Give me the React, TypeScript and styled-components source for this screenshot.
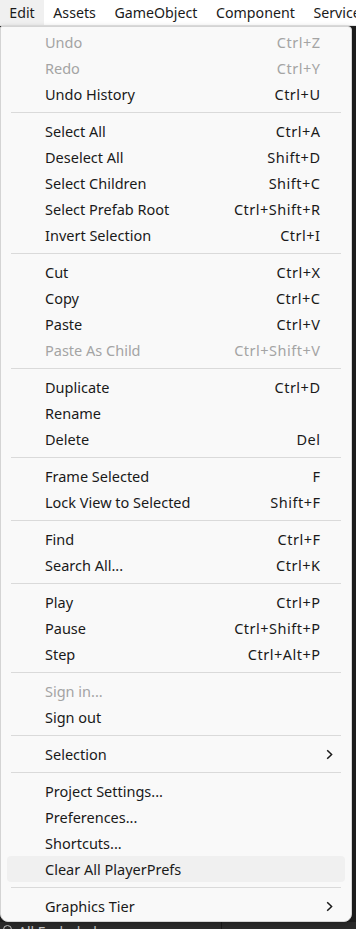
import React from "react";
import styled, { createGlobalStyle } from "styled-components";

const GlobalStyle = createGlobalStyle`
  html, body {
    margin: 0;
    padding: 0;
    height: 100%;
    overflow: hidden;
    background: #262626;
  }
  #root {
    height: 100%;
  }
`;

const Page = styled.div`
  display: flex;
  flex-direction: column;
  height: 929px;
  font-family: "Noto Sans", "Open Sans", sans-serif;
`;

const MenuBar = styled.div`
  display: flex;
  height: 25px;
  background: #ffffff;
  border-bottom: 1px solid #e6e6e6;
  white-space: nowrap;
  overflow: hidden;
`;

const BarItem = styled.div<{ $active?: boolean }>`
  display: flex;
  align-items: center;
  padding: 0 9.3px;
  font-size: 14.2px;
  color: #1a1a1a;
  background: ${(p) => (p.$active ? "#f0f0f0" : "transparent")};
`;

const Workspace = styled.div`
  position: relative;
  flex: 1;
  display: flex;
  flex-direction: column;
  justify-content: flex-end;
  background: #1e1e1e;
`;

const StatusRow = styled.div`
  display: flex;
  height: 7px;
  overflow: hidden;
  background: #2b2b2b;
`;

const StatusCell = styled.div`
  display: flex;
  align-items: flex-start;
  gap: 6px;
  width: 218px;
  padding: 2px 0 0 3px;
  border-right: 1px solid #191919;
  color: #c8c8c8;
  font-size: 14px;
  line-height: 16px;
`;

const Dot = styled.span`
  width: 9px;
  height: 9px;
  margin-top: 1px;
  border: 1.5px solid #c8c8c8;
  border-radius: 50%;
  box-sizing: border-box;
`;

const Popup = styled.div`
  position: absolute;
  top: 0;
  left: 0;
  width: 352px;
  box-sizing: border-box;
  padding: 2px 0 2px;
  background: #f9f9f9;
  border: 1px solid #d4d4d4;
  border-radius: 2px 4px 8px 8px;
  box-shadow: 0 2px 6px rgba(0, 0, 0, 0.25);
`;

const Row = styled.div<{ $disabled?: boolean; $hover?: boolean }>`
  display: flex;
  align-items: center;
  height: 26px;
  margin: 0 6px;
  padding-left: 38px;
  border-radius: 4px;
  font-size: 14.5px;
  white-space: nowrap;
  color: ${(p) => (p.$disabled ? "#a4a4a4" : "#1a1a1a")};
  background: ${(p) => (p.$hover ? "#f0f0f0" : "transparent")};
`;

const Label = styled.span`
  flex: 1;
`;

const Shortcut = styled.span`
  text-align: right;
  letter-spacing: 0.5px;
  margin-right: -0.5px;
`;

const ArrowSlot = styled.span`
  display: flex;
  align-items: center;
  width: 25px;
  padding-left: 6px;
  box-sizing: border-box;
`;

const Separator = styled.div`
  height: 1px;
  margin: 5px 10px;
  background: #dadada;
`;

type Item = { label: string; key?: string; disabled?: boolean; sub?: boolean; hover?: boolean };

const groups: Item[][] = [
  [
    { label: "Undo", key: "Ctrl+Z", disabled: true },
    { label: "Redo", key: "Ctrl+Y", disabled: true },
    { label: "Undo History", key: "Ctrl+U" },
  ],
  [
    { label: "Select All", key: "Ctrl+A" },
    { label: "Deselect All", key: "Shift+D" },
    { label: "Select Children", key: "Shift+C" },
    { label: "Select Prefab Root", key: "Ctrl+Shift+R" },
    { label: "Invert Selection", key: "Ctrl+I" },
  ],
  [
    { label: "Cut", key: "Ctrl+X" },
    { label: "Copy", key: "Ctrl+C" },
    { label: "Paste", key: "Ctrl+V" },
    { label: "Paste As Child", key: "Ctrl+Shift+V", disabled: true },
  ],
  [
    { label: "Duplicate", key: "Ctrl+D" },
    { label: "Rename" },
    { label: "Delete", key: "Del" },
  ],
  [
    { label: "Frame Selected", key: "F" },
    { label: "Lock View to Selected", key: "Shift+F" },
  ],
  [
    { label: "Find", key: "Ctrl+F" },
    { label: "Search All...", key: "Ctrl+K" },
  ],
  [
    { label: "Play", key: "Ctrl+P" },
    { label: "Pause", key: "Ctrl+Shift+P" },
    { label: "Step", key: "Ctrl+Alt+P" },
  ],
  [
    { label: "Sign in...", disabled: true },
    { label: "Sign out" },
  ],
  [{ label: "Selection", sub: true }],
  [
    { label: "Project Settings..." },
    { label: "Preferences..." },
    { label: "Shortcuts..." },
    { label: "Clear All PlayerPrefs", hover: true },
  ],
  [{ label: "Graphics Tier", sub: true }],
];

const Chevron = () => (
  <svg width="7" height="11" viewBox="0 0 7 11">
    <path d="M1.2 1.2 L5.6 5.5 L1.2 9.8" fill="none" stroke="#1a1a1a" strokeWidth="1.5" />
  </svg>
);

export default function App() {
  return (
    <Page>
      <GlobalStyle />
      <MenuBar>
        <BarItem $active>Edit</BarItem>
        <BarItem>Assets</BarItem>
        <BarItem>GameObject</BarItem>
        <BarItem>Component</BarItem>
        <BarItem>Services</BarItem>
      </MenuBar>
      <Workspace>
        <StatusRow>
          <StatusCell>
            <Dot />
            All Excluded
          </StatusCell>
        </StatusRow>
        <Popup>
          {groups.map((group, gi) => (
            <React.Fragment key={gi}>
              {gi > 0 && <Separator />}
              {group.map((item) => (
                <Row key={item.label} $disabled={item.disabled} $hover={item.hover}>
                  <Label>{item.label}</Label>
                  {item.key && <Shortcut>{item.key}</Shortcut>}
                  <ArrowSlot>{item.sub && <Chevron />}</ArrowSlot>
                </Row>
              ))}
            </React.Fragment>
          ))}
        </Popup>
      </Workspace>
    </Page>
  );
}
